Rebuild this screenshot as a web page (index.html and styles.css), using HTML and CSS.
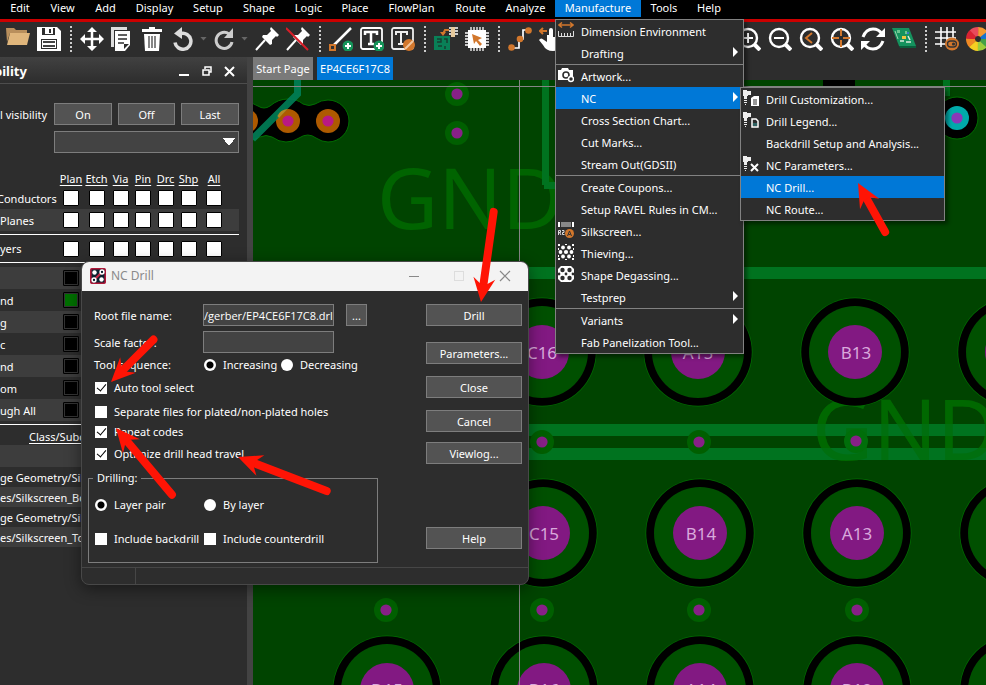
FILE: index.html
```html
<!DOCTYPE html>
<html lang="en">
<head>
<meta charset="utf-8">
<title>PCB Editor</title>
<link rel="stylesheet" href="styles.css">
</head>
<body>
<svg class="defs" aria-hidden="true">
  <defs>
    <g id="pad"><circle r="54.5" fill="#006e00"/><circle r="53.8" fill="#000"/><circle r="46" fill="#005000"/><circle r="27" fill="#821982"/></g>
    <g id="via"><circle r="12" fill="#005f00"/><circle r="5.6" fill="#872087"/></g>
    <g id="lens"><circle cx="11" cy="11" r="9" fill="none" stroke="#fff" stroke-width="2.4"/><path d="M17.500 17.500L23 23" stroke="#fff" stroke-width="4"/></g>
    <g id="pinShape"><path d="M16 0l8 8-2 2-1-1-4 4 0 4-2 1-8-8 1-2 4 0 4-4-1-2z" fill="#fff"/><path d="M10 13l-9 10" stroke="#fff" stroke-width="2"/></g>
    <g id="drillTool"><path d="M0 0h4v1h4v4H5v1H4v3H1V6H0z" fill="#eee"/><path d="M1 10.500h3M1 12.500h3M2 14.500h1" stroke="#eee"/></g>
    <path id="head" d="M0 0L-24 11L-18 3L-18 -3L-24 -11Z" fill="#ff1405"/>
  </defs>
</svg>
<div class="app">
  <nav class="menubar">
    <a href="#">Edit</a><a href="#">View</a><a href="#">Add</a><a href="#">Display</a><a href="#">Setup</a><a href="#">Shape</a><a href="#">Logic</a><a href="#">Place</a><a href="#">FlowPlan</a><a href="#">Route</a><a href="#">Analyze</a>
    <div class="menu-root">
      <a class="open" href="#">Manufacture</a>
      <ul class="menu">
        <li><svg class="mi" viewBox="0 0 16 16"><path d="M1 3h14M4 0.500L1 3l3 2.500M12 0.500L15 3l-3 2.500" fill="none" stroke="#d2772c" stroke-width="1.500"/><path d="M0.500 9v5.500h15V9M3.500 11v3M6.500 11v3M9.500 11v3M12.500 11v3" fill="none" stroke="#ddd"/></svg><a href="#">Dimension Environment</a></li>
        <li class="sub"><a href="#">Drafting</a></li>
        <li class="line"><svg class="mi" viewBox="0 0 16 16"><path d="M0 3h3l1-2h6l1 2h4v10H0z" fill="#fff"/><circle cx="8" cy="8" r="3" fill="#fff" stroke="#2d2d2d" stroke-width="1.600"/><circle cx="13" cy="12" r="2.500" fill="#2d2d2d" stroke="#fff" stroke-width="1.500"/></svg><a href="#">Artwork...</a></li>
        <li class="sub active"><a href="#">NC</a>
          <ul class="menu submenu">
            <li><svg class="mi" viewBox="0 0 16 16"><use href="#drillTool"/><path d="M8 8l3-2h5v10H8z" fill="#fff"/><path d="M10 10h4M10 12h4M10 14h4" stroke="#2d2d2d"/></svg><a href="#">Drill Customization...</a></li>
            <li><svg class="mi" viewBox="0 0 16 16"><use href="#drillTool"/><path d="M9 7h4l2 2v6H9z" fill="#2d2d2d" stroke="#fff" stroke-width="1.500"/><path d="M11 11v3M13 11v3" stroke="#399"/></svg><a href="#">Drill Legend...</a></li>
            <li><a href="#">Backdrill Setup and Analysis...</a></li>
            <li><svg class="mi" viewBox="0 0 16 16"><use href="#drillTool"/><path d="M8 8l7 7M15 8l-7 7" stroke="#fff" stroke-width="2"/></svg><a href="#">NC Parameters...</a></li>
            <li class="active"><a href="#">NC Drill...</a></li>
            <li><a href="#">NC Route...</a></li>
          </ul>
        </li>
        <li><a href="#">Cross Section Chart...</a></li>
        <li><a href="#">Cut Marks...</a></li>
        <li><a href="#">Stream Out(GDSII)</a></li>
        <li class="line"><a href="#">Create Coupons...</a></li>
        <li><a href="#">Setup RAVEL Rules in CM...</a></li>
        <li><svg class="mi" viewBox="0 0 16 16"><path d="M0 0h2v5H0zM14 0h2v5h-2z" fill="#fff"/><path d="M3 0h10v5H3z" fill="#888"/><path d="M.5 13V8.500h2v2h-2M1.500 10.500l1.500 2.500M4 8.500h2v2H4.500v2H6.500" fill="none" stroke="#ddd"/><circle cx="11.500" cy="11.500" r="4.500" fill="#d2772c"/><path d="M9.500 14l2-5 2 5M10.500 12.500h2" fill="none" stroke="#333"/></svg><a href="#">Silkscreen...</a></li>
        <li><svg class="mi" viewBox="0 0 16 16"><g fill="#fff"><circle cx="5" cy="3.500" r="1.900"/><circle cx="11" cy="3.500" r="1.900"/><circle cx="2.500" cy="8" r="1.900"/><circle cx="8" cy="8" r="2.100"/><circle cx="13.500" cy="8" r="1.900"/><circle cx="5" cy="12.500" r="1.900"/><circle cx="11" cy="12.500" r="1.900"/><path d="M0 0h2v2H0zM14 0h2v2h-2zM0 14h2v2H0zM14 14h2v2h-2zM7 0h2v1H7zM7 15h2v1H7zM0 4h1v2H0zM15 4h1v2h-1zM0 11h1v2H0zM15 11h1v2h-1z"/></g></svg><a href="#">Thieving...</a></li>
        <li><svg class="mi" viewBox="0 0 16 16"><path d="M3 0h10l3 3v10l-3 3H3l-3-3V3z" fill="#fff"/><g fill="#2d2d2d"><circle cx="4.500" cy="4" r="2.200"/><circle cx="11.500" cy="4" r="2.200"/><circle cx="4.500" cy="12" r="2.200"/><circle cx="11.500" cy="12" r="2.200"/><circle cx="8" cy="8" r="1.400"/><circle cx="1" cy="8" r="1.400"/><circle cx="15" cy="8" r="1.400"/></g></svg><a href="#">Shape Degassing...</a></li>
        <li class="sub"><a href="#">Testprep</a></li>
        <li class="sub line"><a href="#">Variants</a></li>
        <li><a href="#">Fab Panelization Tool...</a></li>
      </ul>
    </div>
    <a href="#">Tools</a><a href="#">Help</a>
  </nav>

  <div class="toolbar">
    <button aria-label="Open"><svg viewBox="0 0 24 24"><path d="M0 1h8l2 2h11v3H4L1 15z" fill="#b98f5c"/><path d="M4 6h20l-3 12H1z" fill="#e0b67c"/></svg></button>
    <button aria-label="Save"><svg viewBox="0 0 24 24"><path d="M0 0h20l4 4v20H0z" fill="#fff"/><path d="M5 1h13v7H5z" fill="#2d2d2d"/><path d="M8 1h8v6H8z" fill="#fff"/><path d="M12 2h2v4h-2z" fill="#2d2d2d"/><path d="M4 12h16v10H4z" fill="#2d2d2d"/><path d="M5 13h14v8H5z" fill="#fff"/><path d="M6 15h12M6 19h12" stroke="#444" stroke-width="2"/></svg></button>
    <span class="sep"></span>
    <button aria-label="Move"><svg viewBox="0 0 24 24"><path d="M12 2v20M2 12h20" stroke="#fff" stroke-width="2.500"/><path d="M12 0l5 5H7zM12 24l5-5H7zM0 12l5-5v10zM24 12l-5-5v10z" fill="#fff"/></svg></button>
    <button aria-label="Copy"><svg viewBox="0 0 24 24"><path d="M0 0h16v3H3v17H0z" fill="#ddd"/><path d="M4 4h15v14l-5 6H4z" fill="#fff"/><path d="M7 8h9M7 12h9M7 16h6" stroke="#2d2d2d" stroke-width="1.700"/><path d="M13 22v-5h5z" fill="#2d2d2d"/></svg></button>
    <button aria-label="Delete"><svg viewBox="0 0 24 24"><path d="M0 2h7V0h6v2h7v3H0z" fill="#fff"/><path d="M2 7h16l-1 17H3z" fill="#fff"/><path d="M7 9v12M10 9v12M13 9v12" stroke="#444" stroke-width="1.300"/></svg></button>
    <button class="small" aria-label="Undo"><svg viewBox="0 0 20 24"><path d="M8 6.500a8 8 0 1 1-6 9" fill="none" stroke="#ddd" stroke-width="3.500"/><path d="M1 6.500L9 0v12z" fill="#ddd"/></svg></button>
    <span class="caret"></span>
    <button class="small" aria-label="Redo"><svg viewBox="0 0 20 24"><path d="M15 7a8 8 0 1 0 3 8" fill="none" stroke="#ccc" stroke-width="3"/><path d="M19 1v10h-9z" fill="#ccc"/></svg></button>
    <span class="caret"></span>
    <button aria-label="Fix"><svg viewBox="0 0 24 24"><use href="#pinShape"/></svg></button>
    <button aria-label="Unfix"><svg viewBox="0 0 24 24"><use href="#pinShape"/><path d="M0 1l22 22" stroke="#d81e28" stroke-width="2"/></svg></button>
    <span class="sep"></span>
    <button aria-label="Add line"><svg viewBox="0 0 24 24"><path d="M4 19L22 1" stroke="#fff" stroke-width="2.500"/><path d="M1 18h5v5H1z" fill="#333" stroke="#d2772c" stroke-width="2"/><circle cx="19" cy="19" r="5.500" fill="#16945a"/><path d="M16 19h6M19 16v6" stroke="#fff" stroke-width="2"/></svg></button>
    <button aria-label="Add text"><svg viewBox="0 0 24 24"><rect x="1" y="1" width="21" height="21" rx="2" fill="none" stroke="#fff" stroke-width="1.800"/><path d="M5 8V5h12v3M11 5v12M8 17h6" fill="none" stroke="#fff" stroke-width="2.500"/><circle cx="19" cy="19" r="5.500" fill="#16945a"/><path d="M16 19h6M19 16v6" stroke="#fff" stroke-width="2"/></svg></button>
    <button aria-label="Edit text"><svg viewBox="0 0 24 24"><rect x="1" y="1" width="21" height="21" rx="2" fill="none" stroke="#eee" stroke-width="1.800"/><path d="M5 8V5h11v3M10 5v12M7 17h6" fill="none" stroke="#eee" stroke-width="2"/><circle cx="18" cy="18" r="6" fill="#d2772c"/><path d="M14 22l8-8" stroke="#f2c7a0" stroke-width="2"/></svg></button>
    <span class="sep"></span>
    <button aria-label="Place part"><svg viewBox="0 0 24 24"><path d="M0 9h16v14H0z" fill="#098057"/><path d="M3 12h4v3H3M10 12h3v4M4 19h4M11 19v3" fill="none" stroke="#173f32" stroke-width="1.500"/><path d="M9 7l2-4h4" fill="none" stroke="#d2772c" stroke-width="2"/><path d="M6 5h6l-3 4z" fill="#d2772c"/><path d="M17 0h4v10h-4z" fill="#e6c99c"/><path d="M15 1h2M15 4h2M15 7h2M21 1h3M21 4h3M21 7h3" stroke="#fff" stroke-width="1.500"/></svg></button>
    <button aria-label="Select part"><svg viewBox="0 0 24 24"><path d="M3 3h18v18H3z" fill="#fff"/><path d="M6 0v24M9 0v24M12 0v24M15 0v24M18 0v24M0 6h24M0 9h24M0 12h24M0 15h24M0 18h24" stroke="#fff" stroke-width="1.300"/><path d="M7 7l10 4-4 2 4 4-2 2-4-5-2 3z" fill="#d2772c"/></svg></button>
    <span class="sep"></span>
    <button aria-label="Route"><svg viewBox="0 0 24 24"><path d="M3 21h8V12h4V3h6" fill="none" stroke="#fff" stroke-width="1.700"/><circle cx="3.500" cy="20.500" r="3.300" fill="#d2772c"/><circle cx="12" cy="12" r="3.300" fill="#d2772c"/><circle cx="20.500" cy="3.500" r="3.300" fill="#d2772c"/></svg></button>
    <button aria-label="Slide"><svg viewBox="0 0 24 24"><path d="M8 4H1M4 1L1 4l3 3" fill="none" stroke="#d2772c" stroke-width="2"/><path d="M10 3q0-2 2-2t2 2v7h9v8q-3 6-9 6-7 0-10-6l-4-5q2-3 5 0l3 2V8h2z" fill="#fff"/></svg></button>
    <span class="covered"></span>
    <button aria-label="Zoom in"><svg viewBox="0 0 24 24"><use href="#lens"/><path d="M6 11h10M11 6v10" stroke="#fff" stroke-width="2"/></svg></button>
    <button aria-label="Zoom out"><svg viewBox="0 0 24 24"><use href="#lens"/><path d="M6 11h10" stroke="#fff" stroke-width="2"/></svg></button>
    <button aria-label="Zoom previous"><svg viewBox="0 0 24 24"><use href="#lens"/><path d="M13 6l-6 5 6 5" fill="none" stroke="#d2772c" stroke-width="2"/></svg></button>
    <button aria-label="Zoom center"><svg viewBox="0 0 24 24"><use href="#lens"/><path d="M2 11h7M13 11h7M11 2v7M11 13v7" stroke="#d2772c" stroke-width="2"/></svg></button>
    <button aria-label="Refresh"><svg viewBox="0 0 24 24"><path d="M2 10q3-8 10-8 6 0 9 5M22 14q-3 8-10 8-6 0-9-5" fill="none" stroke="#fff" stroke-width="3"/><path d="M24 1v9h-9zM0 23v-9h9z" fill="#fff"/></svg></button>
    <button aria-label="3D view"><svg viewBox="0 0 24 24"><path d="M0 1h17l7 18H7z" fill="#15925e"/><path d="M7 19h17v2H8z" fill="#0b5e3d"/><path d="M3 4l3 8" stroke="#9ed2aa"/><path d="M5 3h3v3H5zM13 4h2v3h-2z" fill="#6bc48f"/><path d="M10 9h4v3h-4z" fill="#f1c340"/><path d="M16 9l2 4M8 14h4M14 15h5" stroke="#d9e9dc" stroke-width="1.500"/><path d="M15 5h2v2h-2z" fill="#3877c2"/></svg></button>
    <span class="sep"></span>
    <button aria-label="Grid"><svg viewBox="0 0 24 24"><path d="M6 0v20M12 0v20M18 0v12M0 5h21M0 11h21M0 17h11" stroke="#fff" stroke-width="1.600"/><ellipse cx="17" cy="17" rx="7" ry="6.500" fill="#d2772c"/><rect x="12.500" y="14" width="9" height="6" rx="3" fill="none" stroke="#333" stroke-width="1.300"/><circle cx="18.500" cy="17" r="1.600" fill="#333"/></svg></button>
    <button aria-label="Colors"><svg viewBox="0 0 24 24"><g fill="none" stroke-width="9" stroke-dasharray="6.300 44"><circle cx="12" cy="12" r="7.500" stroke="#1473d0" stroke-dashoffset="-41"/><circle cx="12" cy="12" r="7.500" stroke="#43a047"/><circle cx="12" cy="12" r="7.500" stroke="#9ccc3c" stroke-dashoffset="-5.900"/><circle cx="12" cy="12" r="7.500" stroke="#f6cf22" stroke-dashoffset="-11.800"/><circle cx="12" cy="12" r="7.500" stroke="#f08a24" stroke-dashoffset="-17.700"/><circle cx="12" cy="12" r="7.500" stroke="#d92332" stroke-dashoffset="-23.600"/><circle cx="12" cy="12" r="7.500" stroke="#e94a5b" stroke-dashoffset="-29.500"/><circle cx="12" cy="12" r="7.500" stroke="#f59b30" stroke-dashoffset="-35.400"/></g></svg></button>
  </div>

  <main class="workspace">
    <aside class="panel">
      <header class="panel-title"><h2>bility</h2>
        <svg class="panel-controls" viewBox="0 0 60 14"><path d="M2 11h10" stroke="#fff" stroke-width="2"/><path d="M28 5V3h6v5h-2M26 6h6v5h-6z" fill="none" stroke="#fff" stroke-width="1.500"/><path d="M48 3l9 9M57 3l-9 9" stroke="#fff" stroke-width="2"/></svg>
      </header>
      <div class="global">
        <span>l visibility</span>
        <div class="trio"><button>On</button><button>Off</button><button>Last</button></div>
        <select aria-label="View"><option></option></select>
      </div>
      <table class="layers">
        <colgroup><col class="w58"><col class="w26"><col class="w25"><col class="w23"><col class="w22"><col class="w23"><col class="w23"><col class="w28"><col></colgroup>
        <thead><tr><th></th><th><a href="#">Plan</a></th><th><a href="#">Etch</a></th><th><a href="#">Via</a></th><th><a href="#">Pin</a></th><th><a href="#">Drc</a></th><th><a href="#">Shp</a></th><th><a href="#">All</a></th><th></th></tr></thead>
        <tbody>
          <tr class="scrolled"><td>Conductors</td><td><i></i></td><td><i></i></td><td><i></i></td><td><i></i></td><td><i></i></td><td><i></i></td><td><i></i></td><td></td></tr>
          <tr class="alt"><td>Planes</td><td><i></i></td><td><i></i></td><td><i></i></td><td><i></i></td><td><i></i></td><td><i></i></td><td><i></i></td><td></td></tr>
        </tbody>
      </table>
      <table class="layers ruled">
        <colgroup><col class="w58"><col class="w26"><col class="w25"><col class="w23"><col class="w22"><col class="w23"><col class="w23"><col class="w28"><col></colgroup>
        <tbody><tr><td>yers</td><td><i></i></td><td><i></i></td><td><i></i></td><td><i></i></td><td><i></i></td><td><i></i></td><td><i></i></td><td></td></tr></tbody>
      </table>
      <ul class="swatches">
        <li><span></span><i></i></li><li><span>nd</span><i class="green"></i></li><li><span>g</span><i></i></li><li><span>c</span><i></i></li><li><span>nd</span><i></i></li><li><span>om</span><i></i></li><li><span>ugh All</span><i></i></li>
      </ul>
      <div class="classes"><a href="#">Class/Subclass</a>
        <ul><li></li><li>ge Geometry/Silkscreen</li><li>es/Silkscreen_Bottom</li><li>ge Geometry/Silkscreen</li><li>es/Silkscreen_Top</li></ul>
      </div>
    </aside>
    <section class="design">
      <div class="tabs"><button>Start Page</button><button class="current">EP4CE6F17C8</button></div>
      <svg class="board" role="img" aria-label="Board layout">
        <g transform="translate(-253 -80)">
          <text class="net" x="377" y="229">GND</text><text class="net" x="812" y="460">GND</text>
          <g fill="#00731f"><path d="M542 80h7v105h-7zM544 182h12v7h-12zM253 267h733v12H253zM253 424h733v12H253zM253 448h733v12H253z"/></g>
          <text class="net over" x="812" y="460" aria-hidden="true">GND</text>
          <path d="M823 80h32v7h-32z" fill="#000"/>
          <path d="M247 103q7 0 11 3 6 4 12 0 8-7 18-7 9 0 15 5 6 3 12 0 6-4 13-4a21 21 0 0 1 0 42q-6 0-12-4-8-6-17 0-6 4-13 4-7 0-14-5-6-3-12 0l-7 3z" fill="#000" stroke="#006e00"/>
          <g fill="#ae5a00"><circle cx="246" cy="121" r="12"/><circle cx="288" cy="121" r="12"/><circle cx="328" cy="121" r="12"/></g>
          <path d="M297.500 80v14l-45 45" fill="none" stroke="#008058" stroke-width="7" opacity=".9"/>
          <path d="M277.500 116a12 12 0 0 1 10-7h0l-8.500 9z" fill="#b88722"/>
          <circle cx="288" cy="121" r="5.600" fill="#b91984"/><circle cx="328" cy="121" r="5.600" fill="#b91984"/>
          <path d="M943 80h7v16h-7z" fill="#00731f"/>
          <circle cx="957" cy="118" r="21" fill="#000" stroke="#006e00"/><circle cx="957" cy="118" r="12" fill="#00aaaa"/><circle cx="957" cy="118" r="5.600" fill="#8a38b8"/>
          <use href="#via" x="457" y="94"/><use href="#via" x="457" y="133"/>
          <use href="#via" x="542" y="442"/><use href="#via" x="699" y="442"/><circle cx="856" cy="441" r="12" fill="#006e0a"/><circle cx="856" cy="441" r="5.600" fill="#872087"/>
          <use href="#via" x="386" y="610"/><use href="#via" x="542" y="610"/><use href="#via" x="699" y="610"/><use href="#via" x="857" y="610"/>
          <use href="#pad" x="542" y="352"/><use href="#pad" x="698" y="352"/><use href="#pad" x="855" y="352"/><use href="#pad" x="1012" y="352"/>
          <use href="#pad" x="543" y="533"/><use href="#pad" x="700" y="533"/><use href="#pad" x="857" y="533"/><use href="#pad" x="1014" y="533"/>
          <use href="#pad" x="387" y="690"/><use href="#pad" x="544" y="690"/><use href="#pad" x="700" y="690"/><use href="#pad" x="857" y="690"/><use href="#pad" x="1014" y="690"/>
          <g class="pin"><text x="542" y="359">C16</text><text x="698" y="359">A15</text><text x="856" y="359">B13</text><text x="544" y="540">C15</text><text x="701" y="540">B14</text><text x="857" y="540">A13</text><text x="387" y="696">D15</text><text x="544" y="696">B16</text><text x="701" y="696">A14</text><text x="857" y="696">B12</text></g>
          <path d="M253 86.500h733M519.500 80v605" stroke="#858585"/>
        </g>
      </svg>
    </section>
  </main>

  <form class="dialog">
    <header>
      <svg class="logo" viewBox="0 0 16 16"><rect x=".8" y=".8" width="14.400" height="14.400" rx="1" fill="#0b2230" stroke="#b01738" stroke-width="1.600"/><path d="M5 11l6-6" stroke="#c92a48" stroke-width="2"/><circle cx="4.500" cy="4.500" r="2.200" fill="#fff"/><circle cx="11.500" cy="11.500" r="2.200" fill="#fff"/><circle cx="12" cy="4" r="1.900" fill="none" stroke="#fff" stroke-width="1.500"/><circle cx="4" cy="12" r="1.900" fill="none" stroke="#fff" stroke-width="1.500"/></svg>
      <h1>NC Drill</h1>
      <svg class="window-controls" viewBox="0 0 102 12"><path d="M0 6.500h10" stroke="#888"/><rect x="45.500" y="1.500" width="9" height="9" fill="none" stroke="#ddd"/><path d="M91 1l10 10M101 1L91 11" stroke="#888" stroke-width="1.200"/></svg>
    </header>
    <div class="body">
      <div class="fields">
        <div class="options">
          <div class="row file"><label for="root">Root file name:</label><input id="root" type="text" value="/gerber/EP4CE6F17C8.drl"><button type="button">...</button></div>
          <div class="row"><label for="scale">Scale factor:</label><input id="scale" type="text"></div>
          <div class="row"><span class="caption">Tool sequence:</span><label class="pick"><input type="radio" name="seq" checked>Increasing</label><label class="pick"><input type="radio" name="seq">Decreasing</label></div>
          <label class="pick"><input type="checkbox" checked>Auto tool select</label>
          <label class="pick"><input type="checkbox">Separate files for plated/non-plated holes</label>
          <label class="pick"><input type="checkbox" checked>Repeat codes</label>
          <label class="pick"><input type="checkbox" checked>Optimize drill head travel</label>
        </div>
        <fieldset><legend>Drilling:</legend>
          <div class="drilling">
            <label class="pick"><input type="radio" name="mode" checked>Layer pair</label><label class="pick"><input type="radio" name="mode">By layer</label>
            <label class="pick"><input type="checkbox">Include backdrill</label><label class="pick"><input type="checkbox">Include counterdrill</label>
          </div>
        </fieldset>
      </div>
      <div class="actions"><button type="button">Drill</button><button type="button">Parameters...</button><button type="button">Close</button><button type="button">Cancel</button><button type="button">Viewlog...</button><button type="button">Help</button></div>
    </div>
    <footer><span></span></footer>
  </form>

  <svg class="arrows" aria-hidden="true">
    <g stroke="#ff1405" stroke-width="8" stroke-linecap="round">
      <g transform="translate(481 302) rotate(98)"><path d="M-91 0h74"/><use href="#head" stroke="none"/></g>
      <g transform="translate(111 382) rotate(135)"><path d="M-60 0h43"/><use href="#head" stroke="none"/></g>
      <g transform="translate(116 428) rotate(230)"><path d="M-87 0h70"/><use href="#head" stroke="none"/></g>
      <g transform="translate(238 457) rotate(201)"><path d="M-95 0h78"/><use href="#head" stroke="none"/></g>
      <g transform="translate(858 183) rotate(241)"><path d="M-56 0h39"/><use href="#head" stroke="none"/></g>
    </g>
  </svg>
</div>
</body>
</html>
```
FILE: styles.css
```css
* { box-sizing: border-box; }
body { margin: 0; background: #2d2d2d; color: #fff; font: 11px/16px "Noto Sans", "Open Sans", sans-serif; }
button, input, select { font: inherit; color: inherit; margin: 0; }
ul { list-style: none; margin: 0; padding: 0; }
a { color: inherit; text-decoration: none; }
h1, h2 { margin: 0; }
.defs { position: absolute; width: 0; height: 0; }

.app { position: relative; display: flex; flex-direction: column; height: 100vh; overflow: hidden; }

.menubar { display: grid; grid-template-columns: 40px 45px 41px 57px 50px 52px 47px 46px 67px 51px 59px 86px 46px 44px; background: #000; border-bottom: 3px solid #cc0000; text-align: center; white-space: nowrap; }
.menubar > a, .open { display: block; height: 19px; line-height: 16px; }
.open { height: 17px; background: #0078d7; }
.menu-root { position: relative; }
.menu { position: absolute; z-index: 5; top: 19px; left: 0; width: 189px; background: #2d2d2d; border: 1px solid #828282; text-align: left; box-shadow: 3px 3px 4px rgba(0, 0, 0, .45); }
.menu li { position: relative; display: flex; align-items: center; height: 22px; padding: 2px 0 0 25px; }
.menu .line { height: 23px; border-top: 1px solid #828282; }
.menu .active { background: #0078d7; }
.mi { position: absolute; left: 2px; top: 2px; width: 16px; height: 16px; }
.sub::after { content: ""; position: absolute; right: 5px; top: 5px; border: 5px solid transparent; border-left-color: #fff; border-right: 0; }
.submenu { top: 0; left: 184px; width: 205px; }

.toolbar { display: flex; align-items: center; gap: 7px; flex: none; height: 35px; padding: 0 6px 2px; background: #2d2d2d; overflow: hidden; }
.toolbar button { flex: none; width: 24px; height: 24px; padding: 0; border: 0; background: none; }
.toolbar .small { width: 20px; }
.toolbar svg { display: block; width: 100%; height: 24px; }
.sep { flex: none; width: 5px; height: 26px; background: repeating-linear-gradient(#ccc 0 2px, transparent 2px 4px) center / 2px 100% no-repeat; }
.caret { flex: none; width: 7px; height: 4px; background: #666; clip-path: polygon(0 0, 100% 0, 50% 100%); }
.covered { flex: none; width: 160px; }

.workspace { display: flex; flex: 1; min-height: 0; }
.panel { flex: none; width: 253px; border-right: 6px solid #434343; overflow: hidden; white-space: nowrap; }
.panel-title { display: flex; align-items: center; justify-content: space-between; height: 27px; padding: 2px 10px 0 0; background: linear-gradient(#414141, #2d2d2d); border-bottom: 1px solid #4d4d4d; }
.panel-title h2 { margin-left: -6px; font-size: 13px; }
.panel-controls { width: 60px; height: 14px; }
.global { display: grid; grid-template-columns: 54px 185px; row-gap: 6px; padding: 19px 0 0; align-items: center; }
.global span { padding-top: 2px; }
.trio { display: grid; grid-template-columns: 58px 57px 58px; gap: 6px; }
.trio button, .actions button, .file button { height: 22px; padding: 1px 0 0; background: #535353; border: 1px solid #7d7d7d; }
.global select { grid-column: 2; height: 22px; border: 1px solid #7d7d7d; border-radius: 0; appearance: none; background: conic-gradient(from -38deg at 50% 100%, #fff 76deg, transparent 0) 168px 6px / 12px 8px no-repeat, #434343; }

.layers { width: 239px; margin-top: 18px; table-layout: fixed; border-collapse: collapse; }
.layers th { height: 16px; padding: 0; font-weight: normal; }
.layers th a, .classes a { text-decoration: underline 1px; text-underline-offset: 2px; text-decoration-skip-ink: none; }
.layers td { height: 22px; padding: 0; text-align: center; }
.layers td:first-child { padding-top: 1px; text-align: left; }
.scrolled td:first-child { text-indent: -3px; }
.layers i, .swatches i { display: block; width: 16px; height: 16px; margin: auto; background: #fff; border: 1px solid #000; border-radius: 1px; }
.alt { background: #3d3d3d; }
.ruled { margin: 3px 8px 0 0; border-top: 1px solid #fff; border-bottom: 1px solid #fff; }
.ruled td { height: 28px; }
.w58 { width: 58px; } .w26 { width: 26px; } .w25 { width: 25px; } .w23 { width: 23px; } .w22 { width: 22px; } .w28 { width: 28px; }
.swatches { margin-top: 4px; }
.swatches li { display: grid; grid-template-columns: 58px 26px; align-items: center; height: 22px; }
.swatches li:nth-child(odd) { background: #3d3d3d; }
.swatches span { padding-top: 1px; }
.swatches i { background: #000; border-color: #000; box-shadow: inset 0 0 0 1px #333; }
.swatches .green { background: #007000; }
.classes { margin-top: 3px; border-top: 1px solid #fff; }
.classes a { display: block; height: 20px; padding-left: 29px; line-height: 24px; }
.classes li { height: 20px; line-height: 22px; }
.classes li:nth-child(odd) { background: #3d3d3d; }
.classes li:first-child { height: 22px; }

.design { display: flex; flex: 1; flex-direction: column; min-width: 0; }
.tabs { display: flex; gap: 4px; height: 23px; }
.tabs button { width: 60px; padding: 0; border: 0; background: #7a7a7a; white-space: nowrap; }
.tabs .current { width: 76px; background: #0078d7; }
.board { flex: 1; width: 100%; min-height: 0; background: #004400; font-family: "Noto Sans", sans-serif; }
.net { font-size: 84px; fill: #006400; }
.over { opacity: .5; fill: #006c00; }
.pin { font-size: 17px; fill: #d9a9dc; text-anchor: middle; }

.dialog { position: absolute; left: 81px; top: 261px; width: 448px; background: #2d2d2d; border: 1px solid #484848; border-radius: 8px; overflow: hidden; box-shadow: 0 4px 16px rgba(0, 0, 0, .45); }
.dialog header { display: flex; align-items: center; height: 29px; padding: 0 17px 2px 8px; background: #f3f3f3; color: #8a8a8a; }
.logo { width: 16px; height: 16px; }
.dialog h1 { margin-left: 5px; font-size: 12px; font-weight: normal; }
.window-controls { width: 102px; height: 12px; margin-left: auto; }
.body { display: flex; justify-content: space-between; height: 276px; padding: 10px 6px 0; }
.fields { width: 290px; }
.options { display: grid; grid-template-rows: 28px 26px 20px 26px 22px 18px 26px; align-items: center; padding-left: 6px; white-space: nowrap; }
.row { display: grid; grid-template-columns: 109px 131px 21px; align-items: center; }
.row:nth-child(3) { grid-template-columns: 109px 77px 80px; }
.row > label:first-child { padding-top: 1px; }
.file button { margin-left: 12px; width: 21px; }
.row > input { width: 131px; height: 22px; padding: 0; background: #434343; border: 1px solid #7d7d7d; font-family: "Open Sans", "Noto Sans", sans-serif; }
.pick { display: flex; align-items: center; gap: 7px; padding-left: 1px; white-space: nowrap; }
.pick input { flex: none; width: 12px; height: 12px; appearance: none; background: #fff; }
.pick [type="radio"] { border-radius: 50%; }
.pick [type="radio"]:checked { background: radial-gradient(circle, #000 3px, #fff 4px); }
.pick [type="checkbox"]:checked::after { content: ""; display: block; width: 4px; height: 8px; margin: 0 0 0 4px; border: solid #000; border-width: 0 1px 1px 0; transform: rotate(40deg); }
fieldset { height: 93px; margin: 3px 0 0; padding: 0; border: 1px solid #7d7d7d; }
legend { margin-left: 4px; padding: 0 4px; }
.drilling { display: grid; grid-template-columns: 109px 1fr; grid-template-rows: 34px 34px; margin: 2px 0 0 5px; }
.actions { display: flex; flex-direction: column; width: 96px; padding-top: 3px; gap: 12px; }
.actions button:first-child { margin-bottom: 4px; }
.actions button:nth-child(5) { margin-top: -2px; }
.actions button:last-child { margin-top: 51px; }
.dialog footer { height: 17px; border-top: 1px solid #464646; }
.dialog footer span { display: block; width: 54px; height: 100%; border-right: 1px solid #464646; }

.arrows { position: absolute; inset: 0; z-index: 10; width: 100%; height: 100%; pointer-events: none; }
```
